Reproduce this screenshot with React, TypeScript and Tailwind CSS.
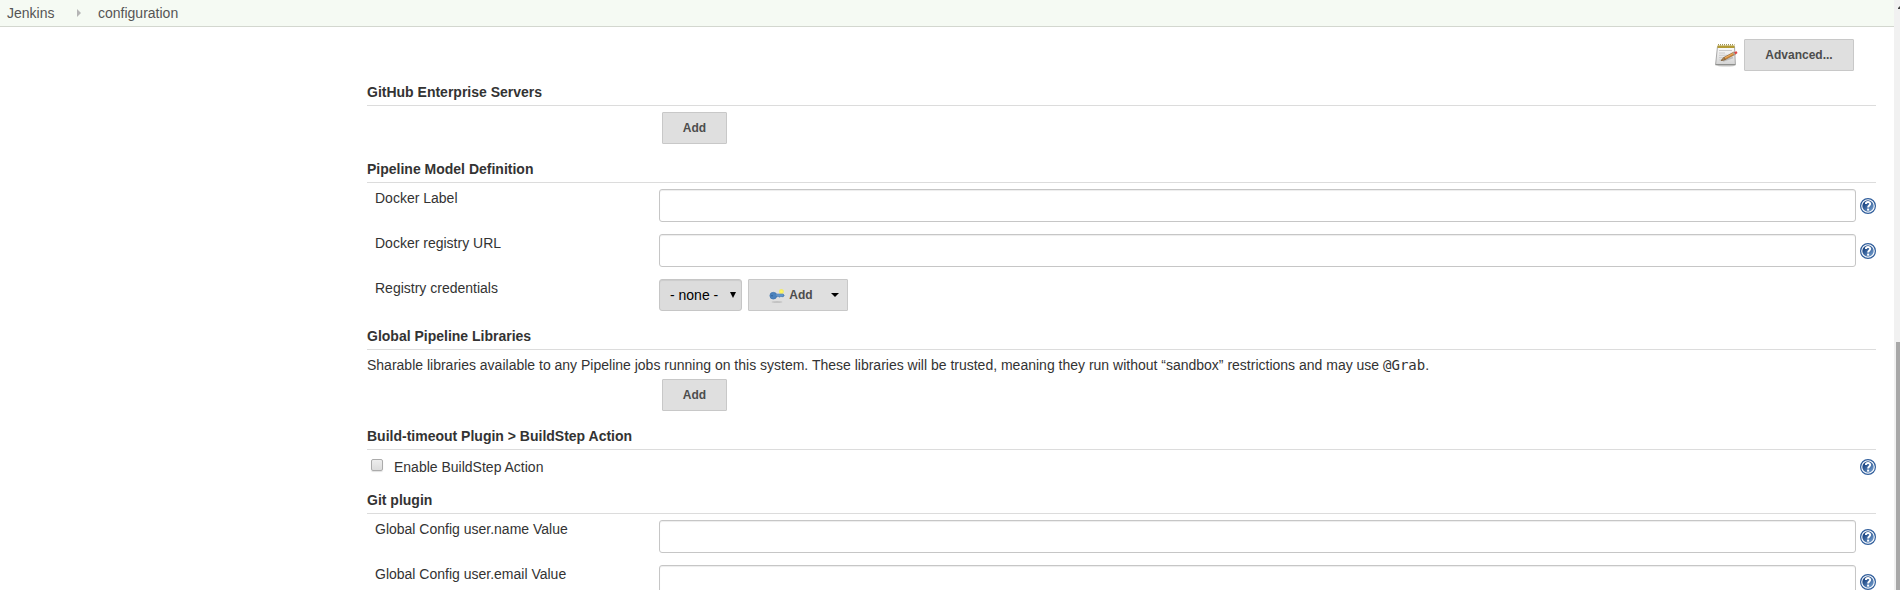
import React from "react";

function HelpIcon() {
  return (
    <svg width="16" height="16" viewBox="0 0 16 16" className="shrink-0">
      <defs>
        <linearGradient id="help" x1="0" y1="0" x2="1" y2="1">
          <stop offset="0.25" stopColor="#204a87" />
          <stop offset="1" stopColor="#7ea8d6" />
        </linearGradient>
      </defs>
      <circle cx="8" cy="8" r="7.4" fill="#fff" stroke="#2f5d9b" strokeWidth="1.2" />
      <circle cx="8" cy="8" r="5.7" fill="url(#help)" />
      <path d="M5.9 5.9C5.9 3.4 10.2 3.5 10.2 5.8C10.2 7.5 8.1 7.4 8.1 9.5" fill="none" stroke="#fff" strokeWidth="1.9" />
      <rect x="7.1" y="10.6" width="2" height="2" fill="#fff" />
    </svg>
  );
}

function NotepadIcon() {
  return (
    <svg width="24" height="24" viewBox="0 0 24 24">
      <defs>
        <linearGradient id="paper" x1="0" y1="0" x2="0" y2="1">
          <stop offset="0" stopColor="#fdfdfd" />
          <stop offset="1" stopColor="#d4d4d4" />
        </linearGradient>
      </defs>
      <ellipse cx="12" cy="22.6" rx="9" ry="1.2" fill="#000" opacity="0.15" />
      <path d="M3.5 3.5H20.5L21.4 21.5H1.6Z" fill="url(#paper)" stroke="#a8a8a8" strokeWidth="1" />
      <path d="M1.5 21.8H21.5" stroke="#858783" strokeWidth="1" />
      <rect x="3.5" y="2.5" width="17" height="2.5" fill="#b39b35" />
      <path d="M4 1.8H20.5" stroke="#857525" strokeWidth="1.1" strokeDasharray="1 1" />
      <path d="M5 7.5H18M5 10H11M5 12.3H16M5 14.6H10M5 17H9" stroke="#cbcbcb" strokeWidth="1" />
      <path d="M9 18L19 14.5" stroke="#777" strokeWidth="1.5" opacity="0.35" />
      <path d="M7.5 17.3L10 14.4L20 9L21.2 11.3L11.3 16.5Z" fill="#d88a35" stroke="#8a6030" strokeWidth="0.7" />
      <path d="M10.4 15L20 10" stroke="#f0b870" strokeWidth="0.8" />
      <path d="M7.2 17.6L10 14.4L11.2 16.5Z" fill="#b99a6c" stroke="#6d4c22" strokeWidth="0.6" />
      <path d="M18.7 9.7L20.2 8.9L21.5 11.2L20 12Z" fill="#a5a8a2" />
      <path d="M20.2 9L22.6 8.2L23.5 10L21.5 11.4Z" fill="#e04343" />
    </svg>
  );
}

function KeyIcon() {
  return (
    <svg width="16" height="16" viewBox="0 0 16 16">
      <ellipse cx="8" cy="15" rx="5.5" ry="0.8" fill="#000" opacity="0.17" />
      <circle cx="12.4" cy="4.6" r="2.5" fill="#f5ec4a" opacity="0.75" />
      <circle cx="12.4" cy="4.6" r="1.3" fill="#fff75e" />
      <path d="M6.5 7.1H14.2L15.2 8.4L14.3 9.7H12.8L12 9.3L11 10.3L10 9.6H6.5Z" fill="#4d86c0" stroke="#3f73ad" strokeWidth="0.6" />
      <circle cx="4.3" cy="8.7" r="3.4" fill="#4a82bd" stroke="#3f73ad" strokeWidth="0.7" />
      <circle cx="3" cy="8.7" r="0.8" fill="#2f5f97" />
      <path d="M7 8H14" stroke="#8db5de" strokeWidth="0.7" />
    </svg>
  );
}

function Button({ className = "", children }: { className?: string; children: React.ReactNode }) {
  return (
    <button
      className={`flex h-8 items-center justify-center rounded-[1px] border border-[#c8c8c8] bg-[#dfdfdf] text-[12px] leading-5 font-bold text-[#4d4d4d] ${className}`}
    >
      {children}
    </button>
  );
}

function SectionHeader({ children }: { children: React.ReactNode }) {
  return <h2 className="h-6 border-b border-[#dcdcdc] font-bold">{children}</h2>;
}

function Field({ label }: { label: string }) {
  return (
    <div className="flex h-[45px] pl-2">
      <label className="w-[284px] shrink-0 pt-[5px]">{label}</label>
      <div className="flex grow gap-1 pt-1.5">
        <input
          aria-label={label}
          className="h-[33px] min-w-0 grow rounded-[3px] border border-[#c6c6c6] bg-white px-2 shadow-[inset_0_1px_1px_rgba(0,0,0,0.075)]"
        />
        <div className="pt-[9px]">
          <HelpIcon />
        </div>
      </div>
    </div>
  );
}

export default function App() {
  return (
    <div className="flex h-[590px] overflow-hidden bg-white font-['Liberation_Sans',Arial,sans-serif] text-[14px] leading-5 text-[#333]">
      <div className="flex w-[1894px] shrink-0 flex-col">
        <nav className="flex h-[27px] shrink-0 border-b border-[#d3d7cf] bg-[#f5faf3] pt-[3px] pl-[7px] text-[#555]">
          <span className="w-[70px]">Jenkins</span>
          <svg width="4" height="8" viewBox="0 0 4 8" className="mt-[6px] mr-[17px]">
            <path d="M0 0L4 4L0 8Z" fill="#b5b5b5" />
          </svg>
          <span>configuration</span>
        </nav>

        <main className="ml-[367px] flex w-[1509px] flex-col">
          <div className="flex justify-end gap-1.5 pt-3 pr-[22px] pb-[11px]">
            <div className="pt-[4px]">
              <NotepadIcon />
            </div>
            <Button className="w-[110px]">Advanced...</Button>
          </div>

          <SectionHeader>GitHub Enterprise Servers</SectionHeader>
          <div className="pt-1.5 pb-[15px] pl-[295px]">
            <Button className="w-[65px]">Add</Button>
          </div>

          <SectionHeader>Pipeline Model Definition</SectionHeader>
          <Field label="Docker Label" />
          <Field label="Docker registry URL" />
          <div className="flex h-[53px] pl-2">
            <span className="w-[284px] shrink-0 pt-[5px]">Registry credentials</span>
            <div className="flex gap-1.5 pt-1.5">
              <button className="flex h-8 w-[83px] items-center justify-between rounded-[3px] border border-[#c6c6c6] bg-[#dcdcdc] pr-[5px] pl-2.5 text-black shadow-[inset_0_1px_1px_rgba(0,0,0,0.075)]">
                <span>- none -</span>
                <svg width="6" height="6" viewBox="0 0 6 6">
                  <path d="M0 0H6L3 6Z" fill="#000" />
                </svg>
              </button>
              <Button className="w-[100px]">
                <span className="ml-3 flex items-center gap-1">
                  <KeyIcon />
                  Add
                </span>
                <svg width="8" height="4" viewBox="0 0 8 4" className="ml-[18px]">
                  <path d="M0 0H8L4 4Z" fill="#000" />
                </svg>
              </Button>
            </div>
          </div>

          <SectionHeader>Global Pipeline Libraries</SectionHeader>
          <p className="h-[29px] pt-[5px]">
            Sharable libraries available to any Pipeline jobs running on this system. These libraries will be trusted,
            meaning they run without “sandbox” restrictions and may use{" "}
            <code className="font-['DejaVu_Sans_Mono',monospace] text-[14px]">@Grab</code>.
          </p>
          <div className="pb-[15px] pl-[295px]">
            <Button className="w-[65px]">Add</Button>
          </div>

          <SectionHeader>Build-timeout Plugin &gt; BuildStep Action</SectionHeader>
          <div className="flex h-10 items-start justify-between">
            <label className="flex pt-[7px] pl-1">
              <input
                type="checkbox"
                className="mt-0.5 mr-[11px] h-3 w-3 appearance-none rounded-[2px] border border-[#ababab] bg-linear-to-b from-[#ededed] to-[#dcdcdc] shadow-[0_1px_1px_rgba(0,0,0,0.12)]"
              />
              Enable BuildStep Action
            </label>
            <div className="pt-[9px]">
              <HelpIcon />
            </div>
          </div>

          <SectionHeader>Git plugin</SectionHeader>
          <Field label="Global Config user.name Value" />
          <Field label="Global Config user.email Value" />
        </main>
      </div>

      <div className="flex w-1.5 shrink-0 flex-col items-end bg-[#f1f1f1]">
        <svg width="2" height="3" viewBox="0 0 2 3" className="mt-1.5 mb-[333px] shrink-0">
          <path d="M2 0V3H0V2Z" fill="#444" />
        </svg>
        <div className="w-1 grow bg-[#a8a8a8]" />
      </div>
    </div>
  );
}
